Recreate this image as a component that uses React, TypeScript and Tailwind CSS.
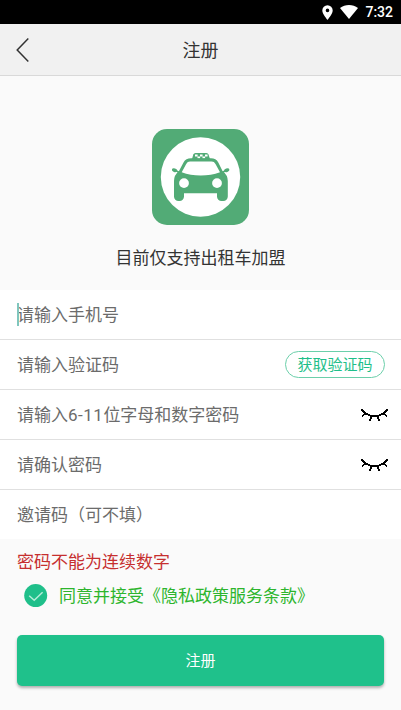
import { useState } from 'react';

interface FieldProps {
  placeholder: React.ReactNode;
  focused?: boolean;
  last?: boolean;
  children?: React.ReactNode;
}

export default function App() {
  const [agreed, setAgreed] = useState(true);

  return (
    <div className="flex h-[710px] w-[401px] flex-col overflow-hidden bg-[#fafafa] font-['Roboto','Noto_Sans_CJK_SC',sans-serif] text-[17px] text-[#333]">
      <StatusBar />

      <header className="grid h-[52px] shrink-0 grid-cols-[60px_1fr_60px] items-center border-b border-[#d9d9d9] bg-[#f1f1f1]">
        <button aria-label="返回" className="pl-4">
          <svg width="14" height="26" viewBox="0 0 14 26" fill="none" stroke="#333" strokeWidth="1.5">
            <path d="M12.3 1.6L1.2 13L12.3 24.4" />
          </svg>
        </button>
        <h1 className="pt-0.5 text-center text-[18px] leading-[26px]">注册</h1>
      </header>

      <section className="flex h-[214px] shrink-0 flex-col items-center pt-[53px]">
        <TaxiLogo />
        <p className="mt-5 leading-[26px]">目前仅支持出租车加盟</p>
      </section>

      <form className="shrink-0 bg-white">
        <Field placeholder="请输入手机号" focused />
        <Field placeholder="请输入验证码">
          <button
            type="button"
            className="mr-4 h-[27px] w-[100px] rounded-full border border-[#6bcfaa] pt-px text-[15px] leading-[25px] text-[#1fbf8a]"
          >
            获取验证码
          </button>
        </Field>
        <Field
          placeholder={
            <>
              请输入<span className="tracking-[0.5px]">6-11</span>位字母和数字密码
            </>
          }
        >
          <ClosedEye />
        </Field>
        <Field placeholder="请确认密码">
          <ClosedEye />
        </Field>
        <Field placeholder="邀请码（可不填）" last />
      </form>

      <p className="mt-[10px] pl-[17px] leading-[26px] text-[#c62f2f]">密码不能为连续数字</p>

      <div className="mt-2 flex items-center pl-6 leading-[26px] text-[#2db52d]">
        <button aria-label="同意" className="mr-[11px]" onClick={() => setAgreed(!agreed)}>
          <svg width="24" height="24" viewBox="0 0 24 24" fill="none">
            <circle cx="11.7" cy="11.6" r="11.5" fill="#1fbf8a" />
            {agreed && <path d="M5.2 11.7L10.2 16.2L18.6 8.2" stroke="#b5edd8" strokeWidth="1.5" />}
          </svg>
        </button>
        <span>同意并接受《隐私政策服务条款》</span>
      </div>

      <button className="mx-[17px] mt-[26px] h-[51px] shrink-0 rounded-[5px] bg-[#1fc18b] pt-px text-[15px] text-white shadow-[0_2px_3px_rgba(0,0,0,0.3)]">
        注册
      </button>
    </div>
  );
}

function StatusBar() {
  return (
    <div className="flex h-6 shrink-0 items-center justify-end bg-black pr-2 text-[14px] font-medium text-white">
      <svg className="mr-[7px]" width="11" height="15" viewBox="0 0 11 15" fill="white">
        <path
          fillRule="evenodd"
          d="M5.5 .2A5.2 5.2 0 0 0 .3 5.4C.3 9 5.5 14.8 5.5 14.8S10.7 9 10.7 5.4A5.2 5.2 0 0 0 5.5 .2ZM5.5 3.6A1.8 1.8 0 1 1 5.5 7.2A1.8 1.8 0 0 1 5.5 3.6Z"
        />
      </svg>
      <svg className="mr-[7px]" width="18" height="14" viewBox="0 0 18 14" fill="white">
        <path d="M9 14L0 3.1C5 -.9 13 -.9 18 3.1Z" />
      </svg>
      <span>7:32</span>
    </div>
  );
}

function Field({ placeholder, focused, last, children }: FieldProps) {
  return (
    <div
      className={`flex items-center justify-between pl-[17px] leading-[26px] text-[#6b6b6b] ${
        last ? 'h-[49px]' : 'h-[50px] border-b border-[#e0e0e0]'
      }`}
    >
      <div className="relative">
        {focused && <i className="absolute top-px left-0 h-[23px] w-[2px] bg-[#80c6bd]" />}
        {placeholder}
      </div>
      {children}
    </div>
  );
}

function ClosedEye() {
  return (
    <button type="button" aria-label="显示密码" className="mr-3">
      <svg
        width="29"
        height="14"
        viewBox="0 0 29 14"
        fill="none"
        stroke="black"
        strokeWidth="2"
        shapeRendering="crispEdges"
      >
        <path d="M1 1.3L5.5 5.2L10.5 8H18.5L23.5 5.2L28 1.3" strokeWidth="1.8" />
        <path d="M6 5L2.2 8.3M11.3 8L10 12.8M17.7 8L19 12.8M23 5L26.8 8.3" strokeWidth="1.8" />
      </svg>
    </button>
  );
}

function TaxiLogo() {
  return (
    <svg width="97" height="96" viewBox="0 0 97 96" fill="#52ab76">
      <rect width="97" height="96" rx="15" />
      <circle cx="48.5" cy="48" r="39.7" fill="white" />
      {/* roof sign */}
      <path d="M40 30L41.3 25.5Q41.8 24 43.5 24H54.5Q56 24 56.5 25.5L58 30Z" />
      <path
        d="M43 25.5h2.6v2h-2.6zM48 25.5h2.6v2h-2.6zM53 25.5h2.6v2h-2.6zM45.5 27.5h2.6v2h-2.6zM50.5 27.5h2.6v2h-2.6z"
        fill="white"
      />
      {/* body */}
      <path d="M27 42L31.5 33.5Q33.8 29.3 39 29.3H59Q64 29.3 66.3 33.5L70.5 42Q75.8 46 75.8 52V67.5A4.5 4.5 0 0 1 71.3 72H69.5A4.5 4.5 0 0 1 65 67.5V64.3H32V67.5A4.5 4.5 0 0 1 27.5 72H26.5A4.5 4.5 0 0 1 22 67.5V52Q22 46 27 42Z" />
      {/* windshield */}
      <path d="M29.7 43.3L34.2 35Q35.5 32.6 38 32.6H59.7Q62.3 32.6 63.5 35L68 43.3Q59 46.5 48.7 46.5T29.7 43.3Z" fill="white" />
      <ellipse cx="22.5" cy="41.2" rx="2.7" ry="1.8" transform="rotate(20 22.5 41.2)" />
      <ellipse cx="74.8" cy="41.2" rx="2.7" ry="1.8" transform="rotate(-20 74.8 41.2)" />
      <path d="M23 41L28 44M74.5 41L69.5 44" stroke="#52ab76" strokeWidth="1.5" />
      <circle cx="32" cy="54.1" r="4.9" fill="white" />
      <circle cx="65" cy="54.1" r="4.9" fill="white" />
    </svg>
  );
}
